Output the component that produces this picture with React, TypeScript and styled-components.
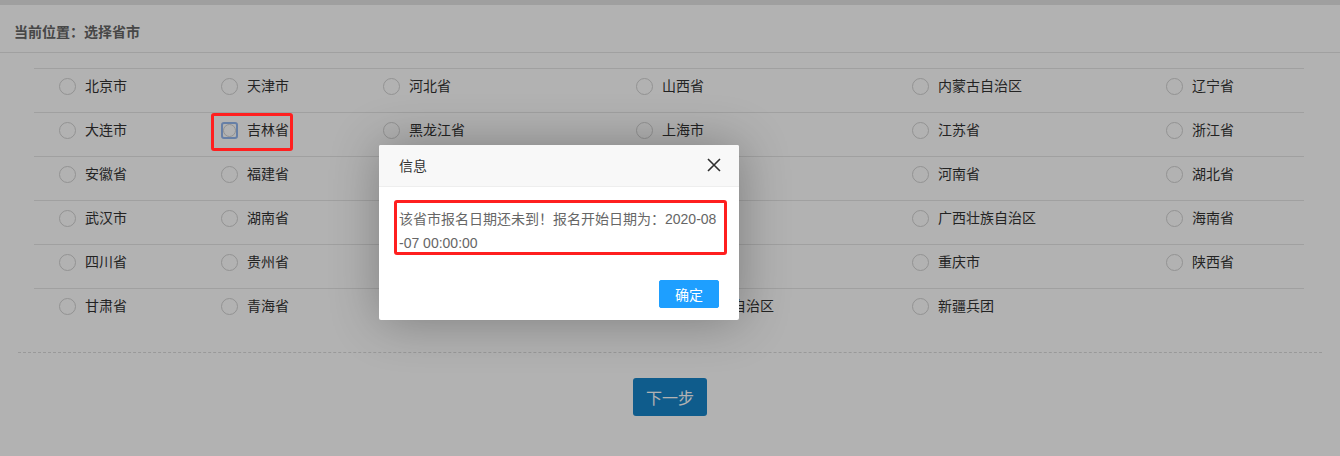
import React from 'react'
import styled, { createGlobalStyle } from 'styled-components'

const GlobalStyle = createGlobalStyle`
  html, body {
    margin: 0;
    padding: 0;
    background: #fff;
    font-family: "Liberation Sans", "Noto Sans CJK SC", sans-serif;
  }
`

const rows: string[][] = [
  ['北京市', '天津市', '河北省', '山西省', '内蒙古自治区', '辽宁省'],
  ['大连市', '吉林省', '黑龙江省', '上海市', '江苏省', '浙江省'],
  ['安徽省', '福建省', '江西省', '山东省', '河南省', '湖北省'],
  ['武汉市', '湖南省', '广东省', '深圳市', '广西壮族自治区', '海南省'],
  ['四川省', '贵州省', '云南省', '西藏自治区', '重庆市', '陕西省'],
  ['甘肃省', '青海省', '宁夏回族自治区', '新疆维吾尔自治区', '新疆兵团', ''],
]

const Page = styled.div`
  width: 1340px;
  height: 456px;
  position: relative;
  overflow: hidden;
`

const TopBar = styled.div`
  height: 5px;
  background: #e4e4e4;
`

const Header = styled.div`
  height: 48px;
  box-sizing: border-box;
  padding: 4px 0 0 14px;
  display: flex;
  align-items: center;
  font-size: 14px;
  font-weight: bold;
  color: #666;
  border-bottom: 1px solid #e6e6e6;
`

const Table = styled.div`
  margin: 15px 0 0 34px;
  width: 1270px;
  display: grid;
  grid-template-columns: 162px 162px 253px 276px 254px 163px;
`

const Cell = styled.div`
  height: 44px;
  box-sizing: border-box;
  padding: 9px 0 0 25px;
  display: flex;
  align-items: flex-start;
  gap: 9px;
  border-top: 1px solid #e6e6e6;
  font-size: 14px;
  line-height: 16px;
  color: #333;
`

const RadioBox = styled.span<{ $focused: boolean }>`
  width: 17px;
  height: 17px;
  box-sizing: border-box;
  flex: none;
  display: flex;
  align-items: center;
  justify-content: center;
  border-radius: ${({ $focused }) => ($focused ? '3px' : '50%')};
  border: ${({ $focused }) => ($focused ? '2px solid #93b6ee' : '1px solid #d2d2d2')};

  &::after {
    content: '';
    display: ${({ $focused }) => ($focused ? 'block' : 'none')};
    width: 13px;
    height: 13px;
    border-radius: 50%;
    border: 1px solid #d2d2d2;
    box-sizing: border-box;
  }
`

const Divider = styled.div`
  margin: 20px 18px 0;
  border-top: 1px dashed #dcdcdc;
`

const Footer = styled.div`
  display: flex;
  justify-content: center;
  padding-top: 25px;
`

const NextButton = styled.button`
  height: 38px;
  padding: 0 13px;
  border: none;
  border-radius: 3px;
  background: #1684c9;
  color: #fff;
  font-size: 16px;
  font-family: "Noto Sans CJK SC", sans-serif;
`

const Shade = styled.div`
  position: absolute;
  inset: 0;
  background: rgba(0, 0, 0, 0.3);
`

const Dialog = styled.div`
  position: absolute;
  left: 379px;
  top: 145px;
  width: 360px;
  background: #fff;
  border-radius: 2px;
  box-shadow: 1px 1px 50px rgba(0, 0, 0, 0.3);
`

const DialogTitle = styled.div`
  height: 42px;
  box-sizing: border-box;
  padding: 0 20px 2px;
  display: flex;
  align-items: center;
  justify-content: space-between;
  background: #f8f8f8;
  border-bottom: 1px solid #eee;
  border-radius: 2px 2px 0 0;
  font-size: 14px;
  color: #333;
`

const CloseIcon = styled.svg`
  width: 14px;
  height: 14px;
  margin-right: -2px;
`

const DialogContent = styled.div`
  padding: 20px;
  line-height: 24px;
  font-size: 14px;
  color: #666;
  word-break: break-all;
`

const DialogButtons = styled.div`
  display: flex;
  justify-content: flex-end;
  padding: 5px 20px 12px;
`

const OkButton = styled.button`
  height: 28px;
  padding: 0 15px;
  border: 1px solid #1e9fff;
  border-radius: 2px;
  background: #1e9fff;
  color: #fff;
  font-size: 14px;
  font-family: "Noto Sans CJK SC", sans-serif;
`

const Mark = styled.div<{ $x: number; $y: number; $w: number; $h: number }>`
  position: absolute;
  left: ${({ $x }) => $x}px;
  top: ${({ $y }) => $y}px;
  width: ${({ $w }) => $w}px;
  height: ${({ $h }) => $h}px;
  box-sizing: border-box;
  border: 3px solid #ff1f1f;
  border-radius: 3px;
`

export default function App() {
  return (
    <Page>
      <GlobalStyle />
      <TopBar />
      <Header>当前位置：选择省市</Header>
      <Table>
        {rows.map((row, ri) =>
          row.map((name, ci) => (
            <Cell key={`${ri}-${ci}`}>
              {name && (
                <>
                  <RadioBox $focused={name === '吉林省'} />
                  <span>{name}</span>
                </>
              )}
            </Cell>
          ))
        )}
      </Table>
      <Divider />
      <Footer>
        <NextButton>下一步</NextButton>
      </Footer>

      <Shade />
      <Mark $x={211} $y={113} $w={82} $h={38} />
      <Dialog>
        <DialogTitle>
          <span>信息</span>
          <CloseIcon viewBox="0 0 14 14">
            <path d="M1 1 L13 13 M13 1 L1 13" stroke="#2f2f2f" strokeWidth="1.6" />
          </CloseIcon>
        </DialogTitle>
        <DialogContent>该省市报名日期还未到！报名开始日期为：2020-08-07 00:00:00</DialogContent>
        <DialogButtons>
          <OkButton>确定</OkButton>
        </DialogButtons>
      </Dialog>
      <Mark $x={394} $y={200} $w={333} $h={55} />
    </Page>
  )
}
